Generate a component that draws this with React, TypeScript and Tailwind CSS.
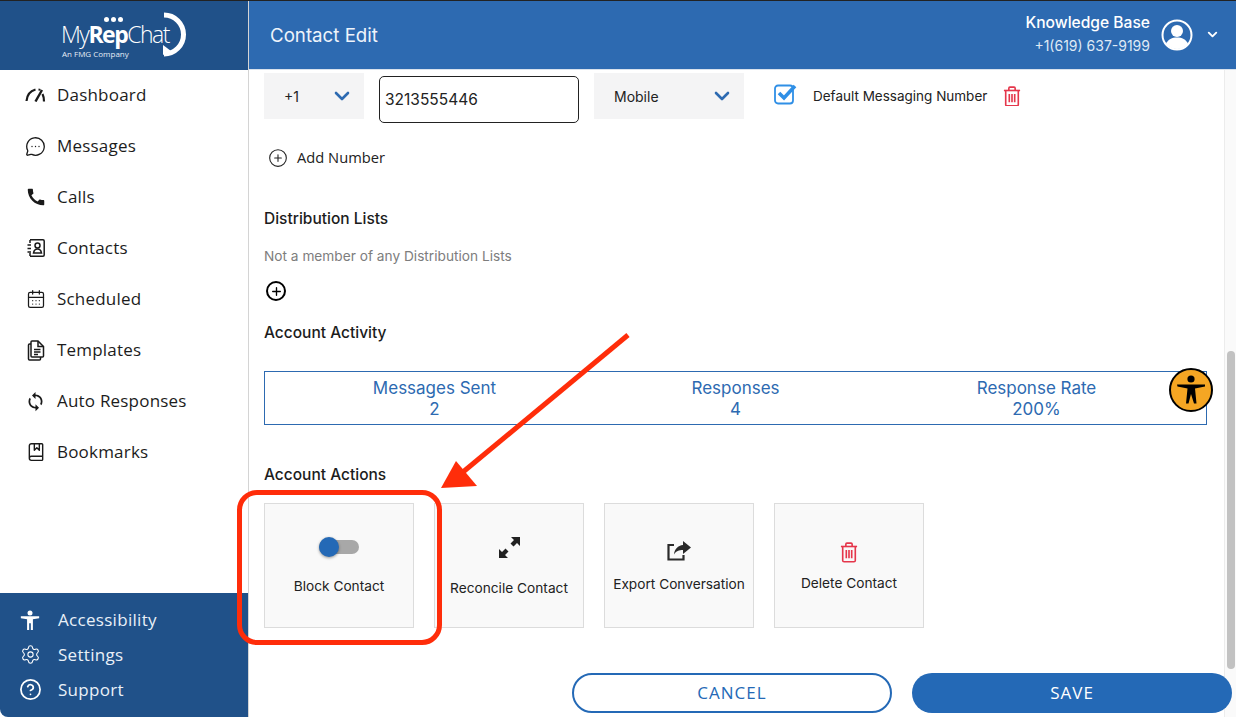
import { ChevronDown, CirclePlus, MessageCircleMore, CalendarDays, BookMarked, Settings, CircleHelp, Plus } from "lucide-react";
import { MdCall, MdSync } from "react-icons/md";

const sidebarFont = "font-['Open_Sans',sans-serif]";

function GaugeIcon() {
  return (
    <svg width="21" height="14" viewBox="0 0 21 14" fill="none" stroke="#1a1a1a" strokeWidth="2.2">
      <path d="M1.500 13C2 7 5 3 10.500 1.500" />
      <path d="M10.500 13.500L17 2" strokeWidth="2.400" />
      <path d="M17.500 6c1 2 1.500 4.500 1.500 7.500" />
      <path d="M13.500 1.500l2 .3" strokeWidth="1.800" />
    </svg>
  );
}

function ContactsIcon() {
  return (
    <svg width="20" height="20" viewBox="0 0 20 20" fill="none" stroke="#1a1a1a" strokeWidth="1.5">
      <path d="M4 1.800h13a1.200 1.200 0 0 1 1.200 1.200v14a1.200 1.200 0 0 1-1.200 1.200H4" />
      <path d="M4 2v3M4 15v3" />
      <path d="M1.500 7h3.500M1.500 10.500h3.500M1.500 14h3.500" />
      <circle cx="11.500" cy="7.500" r="2.500" />
      <path d="M7.500 15c.5-3 2-4 4-4s3.500 1 4 4z" />
    </svg>
  );
}

function TemplatesIcon() {
  return (
    <svg width="18" height="21" viewBox="0 0 18 21" fill="none" stroke="#1a1a1a" strokeWidth="1.5">
      <path d="M5 1h6l5.500 5.500V16a1 1 0 0 1-1 1H5a1 1 0 0 1-1-1V2a1 1 0 0 1 1-1z" />
      <path d="M11 1v5.500h5.500" />
      <path d="M4 4H2.500a1 1 0 0 0-1 1v14a1 1 0 0 0 1 1h10a1 1 0 0 0 1-1v-2" />
      <path d="M7 9.500h6.500M7 12h6.500M7 14.500h4" />
    </svg>
  );
}

function AccessIcon({ size, color }: { size: number; color: string }) {
  return (
    <svg width={size} height={size} viewBox="0 0 24 24" fill={color}>
      <circle cx="12" cy="3.500" r="3" />
      <path d="M1 7.500h22v2.500l-7.500 1v13h-2.500v-8h-2v8H8.500V11L1 10z" />
    </svg>
  );
}

function TrashIcon({ size }: { size: number }) {
  return (
    <svg width={size} height={size * 1.15} viewBox="0 0 20 23" fill="none" stroke="#e5364b" strokeWidth="1.800">
      <path d="M1 5h18" />
      <path d="M6.500 5V2.500a1.200 1.200 0 0 1 1.200-1.200h4.600a1.200 1.200 0 0 1 1.200 1.200V5" />
      <path d="M3 5v15.500a1.500 1.500 0 0 0 1.500 1.500h11a1.500 1.500 0 0 0 1.500-1.500V5" />
      <path d="M7 9v9M10 9v9M13 9v9" />
    </svg>
  );
}

function Logo() {
  return (
    <div className="relative flex h-[70px] w-[248px] shrink-0 items-center justify-center bg-[#205189]">
      <div className="absolute left-[104px] top-[17px] flex gap-[2px]">
        <span className="h-[5px] w-[5px] rounded-full bg-white" />
        <span className="h-[5px] w-[5px] rounded-full bg-white" />
        <span className="h-[5px] w-[5px] rounded-full bg-white" />
      </div>
      <div className="absolute left-[61px] top-[19px] font-['Open_Sans',sans-serif] text-[23px] leading-[30px] tracking-[-1.5px] text-white">
        <span className="font-light">My</span>
        <span className="font-bold">Rep</span>
        <span className="font-light">Chat</span>
      </div>
      <div className="absolute left-[62px] top-[48px] font-['Open_Sans',sans-serif] text-[8px] leading-[11px] text-[#e5edf6]">
        An FMG Company
      </div>
      <svg className="absolute left-[162px] top-[12px]" width="24" height="45" viewBox="0 0 24 45" fill="none">
        <path d="M2 3a19.500 19.500 0 0 1 0 39" stroke="#fff" strokeWidth="5" />
        <path d="M1 33l8 6-8 4z" fill="#fff" />
      </svg>
    </div>
  );
}

const navItems = [
  { label: "Dashboard", icon: <GaugeIcon /> },
  { label: "Messages", icon: <MessageCircleMore size={21} strokeWidth={1.5} color="#1a1a1a" /> },
  { label: "Calls", icon: <MdCall size={22} color="#1a1a1a" /> },
  { label: "Contacts", icon: <ContactsIcon /> },
  { label: "Scheduled", icon: <CalendarDays size={20} strokeWidth={1.5} color="#1a1a1a" /> },
  { label: "Templates", icon: <TemplatesIcon /> },
  { label: "Auto Responses", icon: <MdSync size={21} color="#1a1a1a" /> },
  { label: "Bookmarks", icon: <BookMarked size={20} strokeWidth={1.7} color="#1a1a1a" /> },
];

function Sidebar() {
  return (
    <aside className="flex h-[717px] w-[249px] shrink-0 flex-col border-r border-[#d4d4d4] bg-white">
      <Logo />
      <nav className="flex flex-1 flex-col">
        {navItems.map((item) => (
          <div key={item.label} className="flex h-[51px] items-center pb-[1px]">
            <span className="flex w-[57px] justify-center pl-[24px] pr-[10px]">{item.icon}</span>
            <span className={`${sidebarFont} text-[17px] tracking-[0.2px] text-[#1c1c1c]`}>{item.label}</span>
          </div>
        ))}
      </nav>
      <div className="flex h-[124px] flex-col rounded-bl-[8px] bg-[#205189] pt-[9px] text-[#e9f0f8]">
        <BottomItem label="Accessibility" icon={<AccessIcon size={20} color="#fff" />} />
        <BottomItem label="Settings" icon={<Settings size={21} strokeWidth={1.2} color="#fff" />} />
        <BottomItem label="Support" icon={<CircleHelp size={23} strokeWidth={1.8} color="#fff" />} />
      </div>
    </aside>
  );
}

function BottomItem({ label, icon }: { label: string; icon: React.ReactNode }) {
  return (
    <div className="flex h-[35px] items-center">
      <span className="flex w-[58px] justify-center pl-[2px]">{icon}</span>
      <span className={`${sidebarFont} text-[17px] tracking-[0.3px]`}>{label}</span>
    </div>
  );
}

function Header() {
  return (
    <header className="flex h-[70px] shrink-0 items-center justify-between border-b border-[#d8e1ec] bg-[#2d6ab1] pl-[21px] pr-[16px] text-white">
      <h1 className="pt-[4px] text-[18.7px] font-normal text-[#eef4fb]">Contact Edit</h1>
      <div className="flex items-center">
        <div className="text-right">
          <div className="text-[15.6px] font-medium leading-[22px]">Knowledge Base</div>
          <div className="text-[14px] leading-[24px] text-[#dfe9f5]">+1(619) 637-9199</div>
        </div>
        <svg className="ml-[10px]" width="34" height="34" viewBox="0 0 34 34" fill="none">
          <circle cx="17" cy="17" r="14.500" stroke="#fff" strokeWidth="2" />
          <circle cx="17" cy="13" r="6" fill="#fff" />
          <path d="M6 26c2-5 6-6.500 11-6.500s9 1.500 11 6.500a14.500 14.500 0 0 1-22 0z" fill="#fff" />
        </svg>
        <ChevronDown className="ml-[11px]" size={15} strokeWidth={3} />
      </div>
    </header>
  );
}

function Select({ value, width }: { value: string; width: string }) {
  return (
    <div className={`flex h-[46px] items-center justify-between bg-[#f4f4f5] pl-[20px] pr-[10px] ${width}`}>
      <span className="text-[14px] text-[#222]">{value}</span>
      <ChevronDown size={24} strokeWidth={2.6} color="#2d6ab1" />
    </div>
  );
}

function PhoneRow() {
  return (
    <div className="flex items-start">
      <Select value="+1" width="w-[100px]" />
      <div className="ml-[15px] mt-[3px] flex h-[47px] w-[200px] items-center rounded-[5px] border border-[#222] px-[5px] text-[15.5px] text-[#222]">
        3213555446
      </div>
      <div className="ml-[15px]">
        <Select value="Mobile" width="w-[150px]" />
      </div>
      <div className="ml-[30px] flex h-[46px] items-center">
        <svg width="23" height="22" viewBox="0 0 23 22" fill="none" className="-mt-[4px]">
          <rect x="1" y="2.500" width="18" height="18" rx="3" stroke="#2f8fe6" strokeWidth="1.800" />
          <path d="M5 10l5 5L21 3" stroke="#2f8fe6" strokeWidth="3.600" />
        </svg>
        <span className="ml-[16px] text-[13.5px] text-[#222]">Default Messaging Number</span>
        <span className="ml-[16px]"><TrashIcon size={18} /></span>
      </div>
    </div>
  );
}

function Stat({ label, value }: { label: string; value: string }) {
  return (
    <div className="w-[301px] pt-[2px] text-center text-[17px] leading-[21px] text-[#2d6ab1]">
      <div>{label}</div>
      <div>{value}</div>
    </div>
  );
}

function ActionCard({ label, icon, iconBox, labelTop }: { label: string; icon: React.ReactNode; iconBox: string; labelTop: string }) {
  return (
    <div className="flex h-[125px] w-[150px] flex-col items-center border border-[#dcdcdc] bg-[#f9f9f9]">
      <div className={`flex items-center justify-center ${iconBox}`}>{icon}</div>
      <div className={`text-[13.7px] leading-[18px] text-[#222] ${labelTop}`}>{label}</div>
    </div>
  );
}

function Toggle() {
  return (
    <div className="relative h-[14px] w-[40px] rounded-full bg-[#a8a8a8]">
      <span className="absolute -top-[3px] left-0 h-[20px] w-[20px] rounded-full bg-[#2469b6] shadow-[0_1px_3px_rgba(0,0,0,0.4)]" />
    </div>
  );
}

function ExpandIcon() {
  return (
    <svg width="21" height="21" viewBox="0 0 21 21" fill="#222">
      <path d="M12 0h9v9l-3-3-3.500 3.500-3-3L15 3z" />
      <path d="M0 21v-9l3 3 3.500-3.500 3 3L6 18l3 3z" />
    </svg>
  );
}

function ExportIcon() {
  return (
    <svg width="25" height="20" viewBox="0 0 25 20" fill="none">
      <path d="M7 4H1.500v14.500h15V14" stroke="#2a2a2a" strokeWidth="2.200" />
      <path d="M16 0l8 6.500-8 6.500V9c-4 0-7 1-9 4.500C7.500 8 11 4.500 16 4z" fill="#2a2a2a" />
    </svg>
  );
}

function Content() {
  return (
    <div className="relative flex-1 overflow-hidden pl-[15px] pt-[3px]">
      {/* scrollbar */}
      <div className="absolute bottom-0 right-0 top-0 w-[12px] border-l border-[#ececec] bg-[#fafafa]">
        <div className="absolute left-[2px] top-[281px] h-[318px] w-[8px] rounded-full bg-[#c2c2c2]" />
      </div>

      <div className="relative">
        <PhoneRow />

        <div className="mt-[24px] flex items-center">
          <CirclePlus size={20} strokeWidth={1.3} color="#222" className="ml-[4px]" />
          <span className={`${sidebarFont} ml-[9px] text-[14.7px] leading-[21px] text-[#222]`}>Add Number</span>
        </div>

        <h2 className="mt-[40px] text-[15.5px] font-medium leading-[22px] text-[#1c1c1c]">Distribution Lists</h2>
        <p className="mt-[16px] text-[13.7px] leading-[20px] text-[#7d7d7d]">Not a member of any Distribution Lists</p>
        <div className="mt-[14px] flex h-[22px] w-[24px] items-center justify-center">
          <div className="flex h-[20px] w-[20px] items-center justify-center rounded-full border-2 border-black">
            <Plus size={13} strokeWidth={2.5} color="#000" />
          </div>
        </div>

        <h2 className="mt-[20px] text-[15.5px] font-medium leading-[22px] text-[#1c1c1c]">Account Activity</h2>

        <div className="mt-[27px] flex h-[54px] w-[943px] items-center justify-center border border-[#2d6ab1]">
          <Stat label="Messages Sent" value="2" />
          <Stat label="Responses" value="4" />
          <Stat label="Response Rate" value="200%" />
        </div>

        <h2 className="mt-[39px] text-[15.5px] font-medium leading-[22px] text-[#1c1c1c]">Account Actions</h2>

        <div className="mt-[17px] flex gap-[20px]">
          <ActionCard label="Block Contact" icon={<Toggle />} iconBox="mt-[33px] h-[20px]" labelTop="mt-[20px]" />
          <ActionCard label="Reconcile Contact" icon={<ExpandIcon />} iconBox="mt-[33px] h-[21px]" labelTop="mt-[21px]" />
          <ActionCard label="Export Conversation" icon={<ExportIcon />} iconBox="mt-[37px] h-[20px]" labelTop="mt-[14px]" />
          <ActionCard label="Delete Contact" icon={<TrashIcon size={18} />} iconBox="mt-[38px] h-[21px]" labelTop="mt-[11px]" />
        </div>

        <div className={`${sidebarFont} mt-[45px] flex justify-end gap-[20px] pr-[4px] text-[17px] tracking-[1px]`}>
          <button className="h-[40px] w-[320px] rounded-full border-2 border-[#2469b6] bg-white text-[#2469b6]">CANCEL</button>
          <button className="h-[40px] w-[320px] rounded-full bg-[#2469b6] text-white">SAVE</button>
        </div>
      </div>

      {/* floating accessibility button */}
      <div className="absolute left-[920px] top-[298px] flex h-[44px] w-[44px] items-center justify-center rounded-full border-2 border-black bg-[#f5a623]">
        <svg width="32" height="34" viewBox="0 0 32 34" fill="#000">
          <circle cx="16" cy="6" r="3.600" />
          <path d="M2 11.500h28v2l-10 2 1.500 15h-2.500L16 21l-2.500 9.500H11l1.500-15-10-2z" />
        </svg>
      </div>
    </div>
  );
}

function Annotation() {
  return (
    <>
      <div className="pointer-events-none absolute left-0 right-0 top-0 h-[1px] bg-[#222]" />
      <div className="pointer-events-none absolute left-[237px] top-[490px] h-[155px] w-[205px] rounded-[20px] border-[5px] border-[#ff2d0a]" />
      <svg className="pointer-events-none absolute left-[435px] top-[330px]" width="200" height="160" viewBox="0 0 200 160" fill="none">
        <path d="M193 5L28 142" stroke="#ff2d0a" strokeWidth="5" />
        <path d="M6 158l15-27 21 25z" fill="#ff2d0a" />
      </svg>
    </>
  );
}

export default function App() {
  return (
    <div className="relative flex h-[717px] w-[1236px] overflow-hidden bg-white font-['Inter',sans-serif]">
      <Sidebar />
      <main className="flex min-w-0 flex-1 flex-col">
        <Header />
        <Content />
      </main>
      <Annotation />
    </div>
  );
}
